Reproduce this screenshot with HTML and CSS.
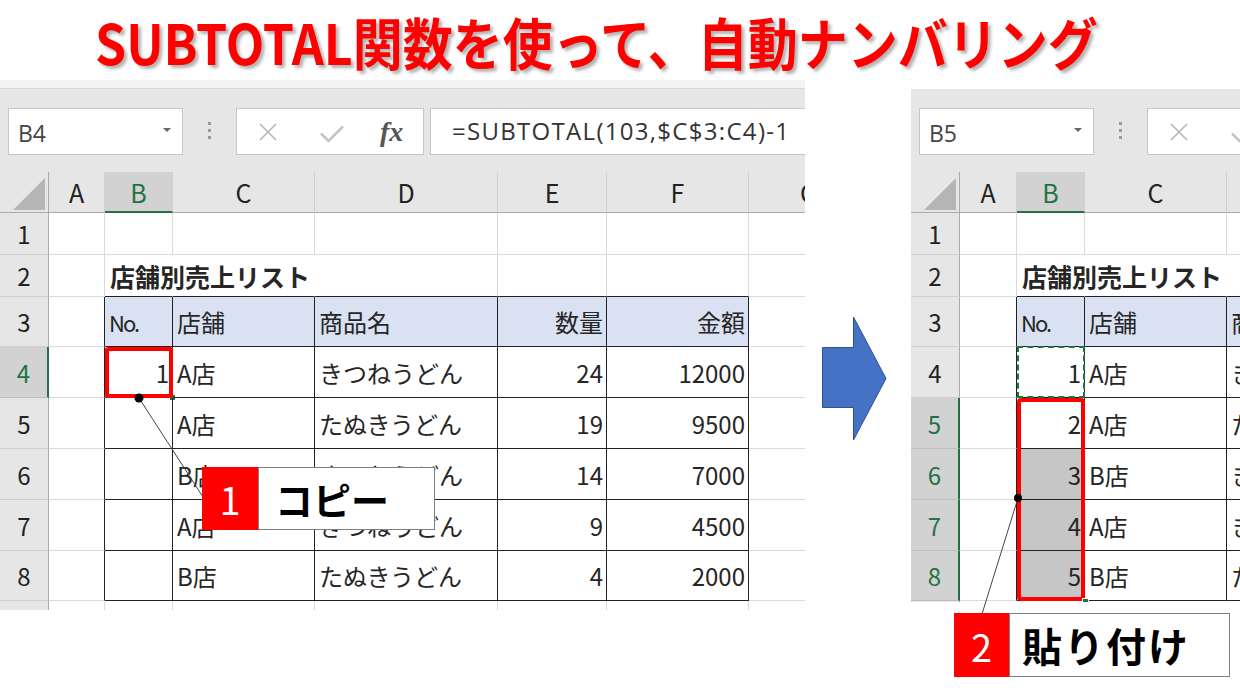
FILE: index.html
```html
<!DOCTYPE html>
<html lang="ja">
<head>
  <meta charset="UTF-8" />
  <title>SUBTOTAL関数を使って、自動ナンバリング</title>
  <link rel="stylesheet" href="styles.css">
</head>
<body>

  <h1 class="title">SUBTOTAL関数を使って、自動ナンバリング</h1>

  <div class="stage">

    <!-- before: copy B4 -->
    <div class="panel panel-l">
      <div class="ribbon"></div>
      <div class="fbar">
        <div class="namebox"><span>B4</span><i class="drop"></i></div>
        <div class="grip"><i></i><i></i><i></i></div>
        <div class="fxbox">
          <svg class="ic-x" width="20" height="20" viewBox="0 0 20 20"><path d="M2 2L18 18M18 2L2 18" stroke="#b5b5b5" stroke-width="1.6" fill="none"/></svg>
          <svg class="ic-ok" width="24" height="18" viewBox="0 0 24 18"><path d="M1 8.5L8.5 16L23 1.5" stroke="#c4c4c4" stroke-width="2.6" fill="none"/></svg>
          <span class="fx">fx</span>
        </div>
        <div class="formula">=SUBTOTAL(103,$C$3:C4)-1</div>
      </div>
      <div class="sheet sheet-l">
        <div class="corner"></div><div class="hd">A</div><div class="hd on">B</div><div class="hd">C</div><div class="hd">D</div><div class="hd">E</div><div class="hd">F</div><div class="hd">G</div>

        <div class="rh">1</div><div class="c"></div><div class="c"></div><div class="c"></div><div class="c"></div><div class="c"></div><div class="c"></div><div class="c"></div>

        <div class="rh">2</div><div class="c"></div><div class="c bt ov b">店舗別売上リスト</div><div class="c bt ov"></div><div class="c bt"></div><div class="c bt"></div><div class="c bt"></div><div class="c"></div>

        <div class="rh">3</div><div class="c bl"></div><div class="c tb th no">No.</div><div class="c tb th">店舗</div><div class="c tb th">商品名</div><div class="c tb th r">数量</div><div class="c tb th r">金額</div><div class="c"></div>

        <div class="rh on">4</div><div class="c bl"></div><div class="c tb r pick">1<i class="handle"></i></div><div class="c tb">A店</div><div class="c tb">きつねうどん</div><div class="c tb r">24</div><div class="c tb r">12000</div><div class="c"></div>

        <div class="rh">5</div><div class="c bl"></div><div class="c tb r"></div><div class="c tb">A店</div><div class="c tb">たぬきうどん</div><div class="c tb r">19</div><div class="c tb r">9500</div><div class="c"></div>

        <div class="rh">6</div><div class="c bl"></div><div class="c tb r"></div><div class="c tb">B店</div><div class="c tb">きつねうどん</div><div class="c tb r">14</div><div class="c tb r">7000</div><div class="c"></div>

        <div class="rh">7</div><div class="c bl"></div><div class="c tb r"></div><div class="c tb">A店</div><div class="c tb">きつねうどん</div><div class="c tb r">9</div><div class="c tb r">4500</div><div class="c"></div>

        <div class="rh">8</div><div class="c bl"></div><div class="c tb r"></div><div class="c tb">B店</div><div class="c tb">たぬきうどん</div><div class="c tb r">4</div><div class="c tb r">2000</div><div class="c"></div>

        <div class="rh"></div><div class="c"></div><div class="c"></div><div class="c"></div><div class="c"></div><div class="c"></div><div class="c"></div><div class="c"></div>
      </div>
    </div>

    <div class="arrow">
      <svg width="66" height="126" viewBox="0 0 66 126"><polygon points="0.5,31.5 31.5,31.5 31.5,1 64,62.5 31.5,124 31.5,91.5 0.5,91.5" fill="#4472c4" stroke="#2f528f" stroke-width="1"/></svg>
    </div>

    <!-- after: paste into B5:B8 -->
    <div class="panel panel-r">
      <div class="fbar">
        <div class="namebox"><span>B5</span><i class="drop"></i></div>
        <div class="grip"><i></i><i></i><i></i></div>
        <div class="fxbox">
          <svg class="ic-x" width="20" height="20" viewBox="0 0 20 20"><path d="M2 2L18 18M18 2L2 18" stroke="#b5b5b5" stroke-width="1.6" fill="none"/></svg>
          <svg class="ic-ok" width="24" height="18" viewBox="0 0 24 18"><path d="M1 8.5L8.5 16L23 1.5" stroke="#c4c4c4" stroke-width="2.6" fill="none"/></svg>
          <span class="fx">fx</span>
        </div>
      </div>
      <div class="sheet sheet-r">
        <div class="corner"></div><div class="hd">A</div><div class="hd on">B</div><div class="hd">C</div><div class="hd">D</div>

        <div class="rh">1</div><div class="c"></div><div class="c"></div><div class="c"></div><div class="c"></div>

        <div class="rh">2</div><div class="c"></div><div class="c bt ov b">店舗別売上リスト</div><div class="c bt ov"></div><div class="c bt"></div>

        <div class="rh">3</div><div class="c bl"></div><div class="c tb th no">No.</div><div class="c tb th">店舗</div><div class="c tb th">商品名</div>

        <div class="rh">4</div><div class="c bl"></div><div class="c tb r marquee">1</div><div class="c tb">A店</div><div class="c tb">きつねうどん</div>

        <div class="rh on">5</div><div class="c bl"></div><div class="c tb r">2</div><div class="c tb">A店</div><div class="c tb">たぬきうどん</div>

        <div class="rh on">6</div><div class="c bl"></div><div class="c tb r grey">3</div><div class="c tb">B店</div><div class="c tb">きつねうどん</div>

        <div class="rh on">7</div><div class="c bl"></div><div class="c tb r grey">4</div><div class="c tb">A店</div><div class="c tb">きつねうどん</div>

        <div class="rh on">8</div><div class="c bl"></div><div class="c tb r grey">5</div><div class="c tb">B店</div><div class="c tb">たぬきうどん</div>

        <div class="rh"></div><div class="c"></div><div class="c"></div><div class="c"></div><div class="c"></div>

        <div class="range"><i class="handle"></i></div>
      </div>
    </div>

  </div>

  <svg class="leaders" width="1240" height="697" viewBox="0 0 1240 697">
    <line x1="139" y1="398" x2="203" y2="497" stroke="#444" stroke-width="1"/>
    <circle cx="139" cy="398" r="4.5" fill="#000"/>
    <line x1="1018" y1="498" x2="982" y2="614" stroke="#444" stroke-width="1"/>
    <circle cx="1018" cy="498" r="4" fill="#000"/>
  </svg>

  <div class="callout callout-1">
    <div class="no">1</div>
    <div class="lbl">コピー</div>
  </div>

  <div class="callout callout-2">
    <div class="no">2</div>
    <div class="lbl">貼り付け</div>
  </div>

</body>
</html>
```

FILE: styles.css
```css
* {
  box-sizing: border-box;
}
body {
  margin: 0;
  width: 1240px;
  height: 697px;
  overflow: hidden;
  position: relative;
  background: #fff;
  color: #262626;
  font-family: "Noto Sans CJK JP", "Noto Sans", sans-serif;
}
.title {
  margin: 0;
  height: 80px;
  padding-left: 95px;
  font-size: 50px;
  line-height: 80px;
  font-weight: 700;
  letter-spacing: 0;
  color: #ff0000;
  white-space: nowrap;
  text-shadow: 3px 3px 3px rgba(0, 0, 0, 0.3);
  transform: scaleY(1.12);
}
.stage {
  display: flex;
  align-items: flex-start;
}
.panel {
  flex: none;
  overflow: hidden;
  background: #e6e6e6;
}
.panel-l {
  width: 805px;
  height: 530px;
}
.panel-r {
  width: 329px;
  height: 513px;
  margin-top: 9px;
}
.arrow {
  flex: none;
  width: 106px;
  padding: 236px 0 0 17px;
}
.arrow svg {
  display: block;
}
.ribbon {
  height: 9px;
  background: #f4f4f4;
  border-bottom: 1px solid #d6d6d6;
}

/* formula bar */
.fbar {
  height: 83px;
  padding: 19px 0 0 8px;
  display: flex;
  align-items: flex-start;
}
.namebox {
  flex: none;
  width: 175px;
  height: 47px;
  background: #fff;
  border: 1px solid #c6c6c6;
  display: flex;
  align-items: center;
  justify-content: space-between;
  padding: 2px 11px 0 9px;
  font-family: "Open Sans", sans-serif;
  font-size: 23px;
  color: #444;
}
.drop {
  width: 0;
  height: 0;
  margin-bottom: 6px;
  border-left: 4px solid transparent;
  border-right: 4px solid transparent;
  border-top: 4px solid #666;
}
.grip {
  flex: none;
  width: 53px;
  height: 47px;
  display: flex;
  flex-direction: column;
  align-items: center;
  justify-content: center;
  gap: 4px;
  padding-bottom: 3px;
}
.grip i {
  width: 3px;
  height: 3px;
  background: #9a9a9a;
}
.fxbox {
  flex: none;
  width: 188px;
  height: 47px;
  background: #fff;
  border: 1px solid #c6c6c6;
  display: flex;
  align-items: center;
}
.ic-x {
  margin-left: 21px;
}
.ic-ok {
  margin-left: 42px;
  margin-top: 5px;
}
.fx {
  margin-left: 36px;
  font-family: "Liberation Serif", serif;
  font-style: italic;
  font-weight: 700;
  font-size: 28px;
  color: #555;
}
.formula {
  flex: 1;
  margin-left: 6px;
  height: 47px;
  background: #fff;
  border: 1px solid #c6c6c6;
  border-right: none;
  padding-left: 21px;
  font-family: "Open Sans", sans-serif;
  font-size: 24px;
  line-height: 44px;
  letter-spacing: 1.3px;
  color: #333;
  white-space: nowrap;
}

/* sheet grid */
.sheet {
  display: grid;
  grid-template-rows: 41px 42px 42px 50px 51px 51px 51px 51px 50px 40px;
  position: relative;
  background: #fff;
  font-size: 24px;
}
.sheet-l {
  grid-template-columns: 49px 56px 68px 142px 183px 109px 142px 120px;
  width: 869px;
}
.sheet-r {
  grid-template-columns: 49px 57px 68px 142px 142px;
  width: 458px;
}
.corner {
  position: relative;
  background: #e6e6e6;
  border-right: 1px solid #ababab;
  border-bottom: 1px solid #ababab;
}
.corner::after {
  content: "";
  position: absolute;
  left: 13px;
  top: 6px;
  width: 32px;
  height: 32px;
  background: #b5b5b5;
  clip-path: polygon(100% 0, 100% 100%, 0 100%);
}
.hd {
  background: #e6e6e6;
  border-right: 1px solid #d0d0d0;
  border-bottom: 1px solid #ababab;
  display: flex;
  align-items: center;
  justify-content: center;
  font-size: 25px;
  color: #222;
}
.hd.on {
  background: #d2d2d2;
  color: #217346;
  border-bottom: 2px solid #217346;
}
.rh {
  background: #e6e6e6;
  border-right: 1px solid #ababab;
  border-bottom: 1px solid #d0d0d0;
  display: flex;
  align-items: center;
  justify-content: center;
  font-size: 24px;
  color: #222;
}
.rh.on {
  background: #d2d2d2;
  color: #217346;
  border-right: 2px solid #217346;
  border-bottom-color: #bdbdbd;
}
.c {
  position: relative;
  display: flex;
  align-items: center;
  padding: 0 3px 0 4px;
  white-space: nowrap;
  border-right: 1px solid #dadada;
  border-bottom: 1px solid #dadada;
}
.c.bl {
  border-right-color: #222;
}
.c.bt {
  border-bottom-color: #222;
}
.c.ov {
  border-right-color: transparent;
}
.c.tb {
  border-right-color: #222;
  border-bottom-color: #222;
}
.th {
  background: #d9e1f2;
}
.r {
  justify-content: flex-end;
}
.b {
  font-weight: 700;
  font-size: 25px;
  padding-left: 5px;
}
.no {
  letter-spacing: -2px;
  font-size: 22px;
}
.grey {
  background: #c6c6c6;
}

/* selections */
.pick::after {
  content: "";
  position: absolute;
  inset: 0 -1px -1px 0;
  border: 4px solid #ff0000;
  border-radius: 3px;
}
.handle {
  position: absolute;
  right: -4px;
  bottom: -4px;
  width: 7px;
  height: 7px;
  background: #217346;
  border: 1px solid #fff;
}
.marquee::after {
  content: "";
  position: absolute;
  inset: -1px -1px -1px 0;
  border: 2px dashed #217346;
}
.range {
  position: absolute;
  left: 106px;
  top: 226px;
  width: 68px;
  height: 203px;
  border: 4px solid #ff0000;
  border-radius: 4px;
}
.range .handle {
  right: -8px;
  bottom: -8px;
}

/* callouts */
.leaders {
  position: absolute;
  left: 0;
  top: 0;
}
.callout {
  position: absolute;
  display: flex;
  height: 63px;
}
.callout .no {
  width: 56px;
  background: #ff0000;
  color: #fff;
  display: flex;
  align-items: center;
  justify-content: center;
  font-size: 38px;
  letter-spacing: 0;
}
.callout .lbl {
  background: #fff;
  border: 1px solid #7f7f7f;
  display: flex;
  align-items: center;
  color: #000;
  font-weight: 700;
}
.callout-1 {
  left: 202px;
  top: 467px;
}
.callout-1 .lbl {
  width: 177px;
  padding-left: 16px;
  font-size: 38px;
}
.callout-2 {
  left: 954px;
  top: 613px;
  height: 64px;
}
.callout-2 .no {
  width: 55px;
}
.callout-2 .lbl {
  width: 221px;
  padding-left: 12px;
  font-size: 40px;
  letter-spacing: 2px;
}
```
